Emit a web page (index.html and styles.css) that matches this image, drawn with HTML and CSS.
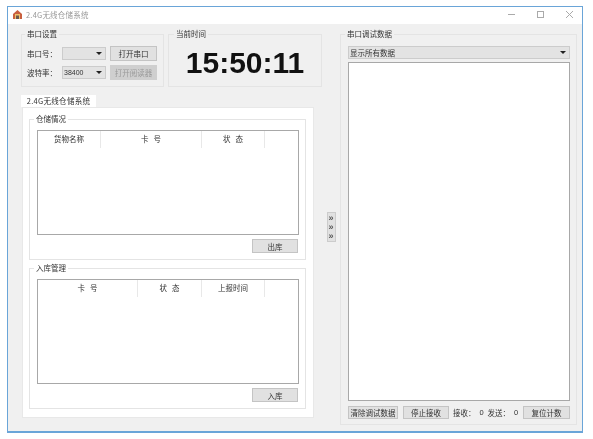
FILE: index.html
```html
<!DOCTYPE html>
<html lang="en">
<head>
    <meta charset="UTF-8">
    <title>2.4G无线仓储系统</title>
    <link rel="stylesheet" href="styles.css">
</head>
<body>
<div class="window">
    <div class="titlebar">
        <svg class="app-icon" width="9" height="9" viewBox="0 0 9 9">
            <path d="M0 4 L4.5 0 L9 4 L9 9 L0 9 Z" fill="#c9603f"/>
            <rect x="2" y="4" width="5" height="5" fill="#efc06a"/>
            <rect x="3" y="5.5" width="3" height="3.5" fill="#6b5a50"/>
        </svg>
        <span class="title">2.4G无线仓储系统</span>
        <div class="win-btns">
            <svg width="7" height="7" viewBox="0 0 7 7"><path d="M0 3.5 H7" stroke="#aaa" fill="none"/></svg>
            <svg width="7" height="7" viewBox="0 0 7 7"><rect x="0.5" y="0.5" width="6" height="6" stroke="#aaa" fill="none"/></svg>
            <svg width="7" height="7" viewBox="0 0 7 7"><path d="M0 0 L7 7 M7 0 L0 7" stroke="#aaa" fill="none"/></svg>
        </div>
    </div>
    <div class="content">
        <div class="left">
            <div class="top-row">
                <fieldset class="group serial">
                    <legend>串口设置</legend>
                    <div class="form-row">
                        <label>串口号：</label>
                        <div class="select small"><span></span><i class="arrow"></i></div>
                        <button class="btn open">打开串口</button>
                    </div>
                    <div class="form-row">
                        <label>波特率：</label>
                        <div class="select small"><span>38400</span><i class="arrow"></i></div>
                        <button class="btn open" disabled>打开阅读器</button>
                    </div>
                </fieldset>
                <fieldset class="group clock">
                    <legend>当前时间</legend>
                    <div class="time">15:50:11</div>
                </fieldset>
            </div>
            <div class="tab">2.4G无线仓储系统</div>
            <div class="tab-page">
                <fieldset class="group white">
                    <legend>仓储情况</legend>
                    <div class="list">
                        <div class="list-head">
                            <span class="c-a">货物名称</span>
                            <span class="c-b">卡 号</span>
                            <span class="c-a">状 态</span>
                        </div>
                    </div>
                    <div class="actions"><button class="btn act">出库</button></div>
                </fieldset>
                <fieldset class="group white">
                    <legend>入库管理</legend>
                    <div class="list">
                        <div class="list-head">
                            <span class="c-d">卡 号</span>
                            <span class="c-c">状 态</span>
                            <span class="c-a">上报时间</span>
                        </div>
                    </div>
                    <div class="actions"><button class="btn act">入库</button></div>
                </fieldset>
            </div>
        </div>
        <div class="splitter">
            <button class="toggle"><span>»</span><span>»</span><span>»</span></button>
        </div>
        <fieldset class="group debug">
            <legend>串口调试数据</legend>
            <div class="select wide"><span>显示所有数据</span><i class="arrow"></i></div>
            <div class="log"></div>
            <div class="debug-foot">
                <button class="btn clear">清除调试数据</button>
                <button class="btn stop">停止接收</button>
                <span class="count first">接收：</span><span class="num">0</span>
                <span class="count">发送：</span><span class="num">0</span>
                <button class="btn reset">复位计数</button>
            </div>
        </fieldset>
    </div>
</div>
</body>
</html>
```

FILE: styles.css
```css
* {
    margin: 0;
    padding: 0;
    box-sizing: border-box;
}

body {
    background: #ffffff;
    font-family: "Noto Sans CJK SC", "Liberation Sans", sans-serif;
    font-size: 7.5px;
    color: #333333;
    padding: 6px 10px 6px 7px;
}

.window {
    width: 576px;
    height: 427px;
    border: 1px solid #6aa5d8;
    border-bottom-width: 2px;
    background: #f0f0f0;
    display: flex;
    flex-direction: column;
    filter: blur(0.35px);
}

.titlebar {
    height: 17px;
    background: #ffffff;
    display: flex;
    align-items: center;
    padding: 0 0 3px 5px;
    flex-shrink: 0;
}

.title {
    margin-left: 4px;
    color: #999999;
    letter-spacing: 0.2px;
}

.win-btns {
    margin-left: auto;
    display: flex;
    gap: 22px;
    padding-right: 9px;
}

.content {
    flex: 1;
    min-height: 0;
    display: flex;
    padding: 5px 5px 6px 13px;
}

.left {
    width: 301px;
    display: flex;
    flex-direction: column;
}

.top-row {
    display: flex;
    gap: 4px;
    height: 58px;
}

.group {
    border: 1px solid #e4e4e4;
    min-width: 0;
}

.group legend {
    margin-left: -3px;
    padding: 0 2px;
    line-height: 10px;
}

.serial {
    width: 143px;
    padding: 7px 5px 0;
}

.serial legend {
    margin-left: -2px;
}

.clock {
    width: 154px;
    padding: 7px 0 0;
}

.clock legend {
    margin-left: 5px;
}

.form-row {
    display: flex;
    align-items: center;
    height: 15px;
    margin-bottom: 4px;
}

.form-row label {
    width: 35px;
}

.select {
    display: flex;
    align-items: center;
    justify-content: space-between;
    background: #e3e3e3;
    border: 1px solid #cccccc;
    padding: 0 3px 0 1px;
}

.small {
    width: 44px;
    height: 13px;
    font-family: "Liberation Sans", sans-serif;
    font-size: 7px;
}

.arrow {
    width: 0;
    height: 0;
    border-left: 3px solid transparent;
    border-right: 3px solid transparent;
    border-top: 3px solid #222222;
}

.btn {
    font-family: inherit;
    font-size: 7.5px;
    color: #333333;
    background: #e1e1e1;
    border: 1px solid #c4c4c4;
    flex-shrink: 0;
}

.btn:disabled {
    color: #9a9a9a;
    background: #cfcfcf;
    border-color: #cfcfcf;
}

.open {
    width: 47px;
    height: 15px;
    margin-left: 4px;
}

.time {
    font-family: "Liberation Sans", sans-serif;
    font-size: 30px;
    font-weight: bold;
    color: #111111;
    text-align: center;
    line-height: 34px;
}

.tab {
    width: 75px;
    height: 12px;
    margin-top: 8px;
    background: #ffffff;
    text-align: center;
    line-height: 12px;
    letter-spacing: 0.3px;
}

.tab-page {
    width: 292px;
    height: 311px;
    margin-left: 1px;
    padding: 6px 7px 0 6px;
    background: #ffffff;
    border: 1px solid #e8e8e8;
    display: flex;
    flex-direction: column;
    gap: 3px;
}

.white {
    padding: 6px 6px 0 7px;
    height: 146px;
}

.list {
    height: 105px;
    background: #ffffff;
    border: 1px solid #a8a8a8;
}

.list-head {
    display: flex;
    height: 17px;
    line-height: 16px;
    text-align: center;
    word-spacing: 3.5px;
}

.list-head span {
    border-right: 1px solid #e8e8e8;
}

.c-a {
    width: 63px;
}

.c-b {
    width: 101px;
}

.c-c {
    width: 64px;
}

.c-d {
    width: 100px;
}

.actions {
    display: flex;
    justify-content: flex-end;
    padding: 4px 1px 0 0;
}

.act {
    width: 46px;
    height: 14px;
}

.splitter {
    width: 18px;
    display: flex;
    align-items: center;
    justify-content: center;
}

.toggle {
    width: 9px;
    height: 30px;
    font-family: "Liberation Sans", sans-serif;
    font-size: 9px;
    font-weight: bold;
    line-height: 9px;
    background: #e1e1e1;
    border: 1px solid #cccccc;
    color: #555555;
    display: flex;
    flex-direction: column;
    align-items: center;
    justify-content: center;
}

.debug {
    flex: 1;
    min-width: 0;
    padding: 7px 6px 0 7px;
    display: flex;
    flex-direction: column;
}

.wide {
    height: 13px;
    flex-shrink: 0;
}

.log {
    height: 339px;
    margin-top: 3px;
    background: #ffffff;
    border: 1px solid #a8a8a8;
    flex-shrink: 0;
}

.debug-foot {
    display: flex;
    align-items: center;
    margin-top: 5px;
    white-space: nowrap;
}

.debug-foot .btn {
    height: 13px;
    padding: 0;
}

.clear {
    width: 50px;
}

.stop {
    width: 46px;
    margin-left: 5px;
}

.count {
    flex-shrink: 0;
}

.first {
    margin-left: 4px;
}

.num {
    width: 12px;
    flex-shrink: 0;
    text-align: center;
    font-family: "Liberation Sans", sans-serif;
}

.reset {
    width: 47px;
    margin-left: auto;
}
```
